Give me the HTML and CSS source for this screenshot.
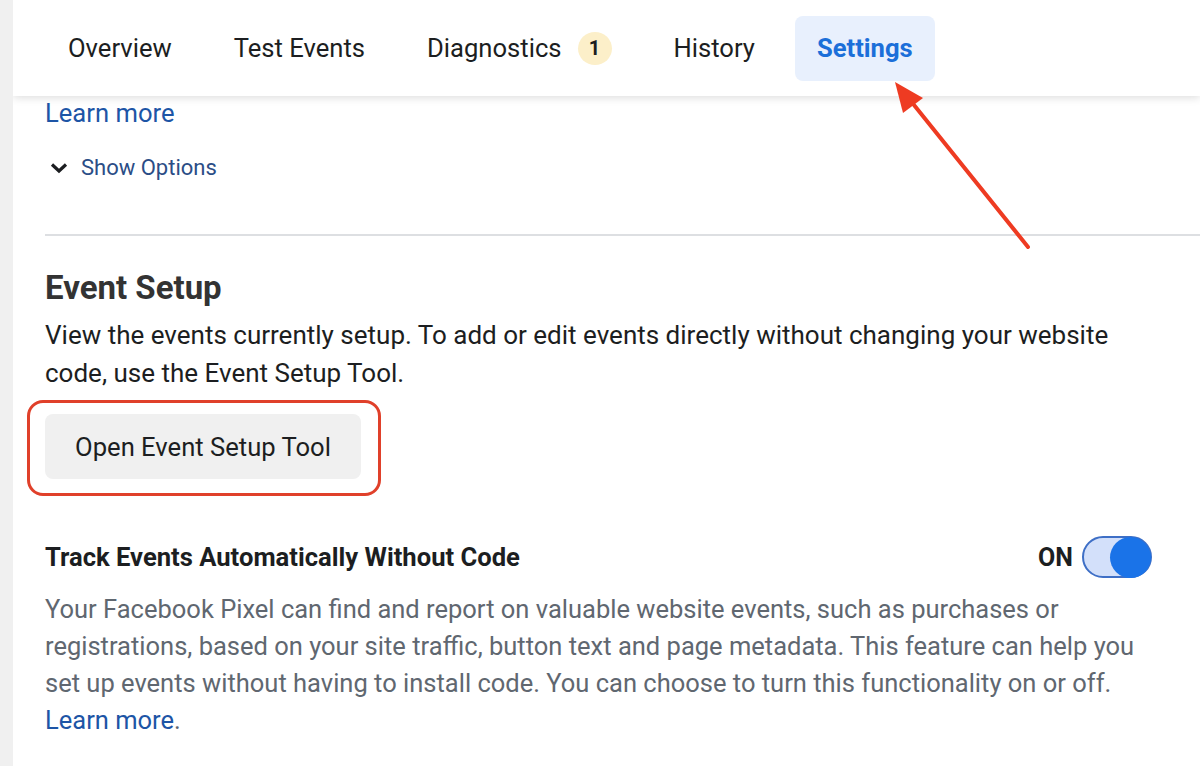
FILE: index.html
```html
<!DOCTYPE html>
<html>
<head>
    <title>Pixel Settings</title>
    <meta name="viewport" content="width=device-width, initial-scale=1.0">
    <link rel="stylesheet" href="styles.css">
</head>
<body>
    <div class="side-strip"></div>
    <div class="main">
        <nav class="tabs">
            <a class="tab">Overview</a>
            <a class="tab">Test Events</a>
            <a class="tab">Diagnostics <span class="badge">1</span></a>
            <a class="tab">History</a>
            <a class="tab active">Settings</a>
        </nav>

        <div class="content">
            <a class="link learn-top">Learn more</a>
            <div class="show-options">
                <svg width="20" height="14" viewBox="0 0 20 14"><path d="M3 3.5 L10 10 L17 3.5" fill="none" stroke="#1c1e21" stroke-width="3.2"/></svg>
                <span>Show Options</span>
            </div>

            <hr class="divider">

            <h2 class="section-title">Event Setup</h2>
            <p class="section-text">View the events currently setup. To add or edit events directly without changing your website code, use the Event Setup Tool.</p>

            <div class="highlight">
                <button class="btn">Open Event Setup Tool</button>
            </div>

            <div class="track-row">
                <h3 class="track-title">Track Events Automatically Without Code</h3>
                <div class="toggle-wrap">
                    <span class="toggle-label">ON</span>
                    <span class="toggle"><span class="knob"></span></span>
                </div>
            </div>
            <p class="track-text">Your Facebook Pixel can find and report on valuable website events, such as purchases or registrations, based on your site traffic, button text and page metadata. This feature can help you set up events without having to install code. You can choose to turn this functionality on or off. <a class="link">Learn more</a>.</p>
        </div>

        <!-- annotation arrow pointing at the Settings tab -->
        <svg class="arrow" width="160" height="180" viewBox="0 0 160 180">
            <line x1="148" y1="167" x2="30" y2="20" stroke="#ee3b22" stroke-width="4" stroke-linecap="round"/>
            <polygon points="15,2 43,18 23,33" fill="#ee3b22"/>
        </svg>
    </div>
</body>
</html>
```

FILE: styles.css
```css
body {
    margin: 0;
    display: flex;
    min-height: 766px;
    font-family: Roboto, "Liberation Sans", sans-serif;
    color: #1c1e21;
    background: #fff;
}

.side-strip {
    width: 13px;
    flex-shrink: 0;
    background: #f0f0f0;
}

.main {
    flex: 1;
    position: relative;
    overflow: hidden;
}

.tabs {
    display: flex;
    align-items: center;
    gap: 18px;
    height: 96px;
    padding-left: 33px;
    background: #fff;
    box-shadow: 0 2px 8px rgba(0, 0, 0, 0.13);
    position: relative;
    z-index: 1;
}

.tab {
    display: flex;
    align-items: center;
    height: 65px;
    padding: 0 22px;
    font-size: 25.6px;
    color: #1c1e21;
    border-radius: 8px;
}

.tab.active {
    background: #e8f0fd;
    color: #1b6fd9;
    font-weight: 700;
}

.badge {
    display: inline-flex;
    align-items: center;
    justify-content: center;
    width: 34px;
    height: 33px;
    margin-left: 16px;
    border-radius: 50%;
    background: #fcefc9;
    font-size: 20px;
    font-weight: 700;
    color: #1c1e21;
}

.content {
    padding: 0 0 0 32px;
}

.link {
    color: #1d55a6;
}

.learn-top {
    display: block;
    font-size: 25.6px;
    line-height: 34px;
}

.show-options {
    display: flex;
    align-items: center;
    gap: 12px;
    margin-top: 25px;
    padding-left: 4px;
    font-size: 22px;
    color: #2b4d86;
}

.divider {
    border: none;
    border-top: 2px solid #dddfe2;
    margin: 54px 0 0 0;
}

.section-title {
    font-size: 33px;
    font-weight: 700;
    color: #333;
    margin: 32px 0 0 0;
    line-height: 40px;
}

.section-text {
    font-size: 26px;
    line-height: 38px;
    margin: 8px 0 0 0;
    max-width: 1090px;
}

.highlight {
    display: inline-block;
    margin: 8px 0 0 -18px;
    padding: 11px 17px 14px 15px;
    border: 3px solid #e0402a;
    border-radius: 16px;
}

.btn {
    display: block;
    width: 316px;
    height: 65px;
    border: none;
    border-radius: 8px;
    background: #f0f0f0;
    font-family: Roboto, "Liberation Sans", sans-serif;
    font-size: 25.6px;
    color: #1c1e21;
}

.track-row {
    display: flex;
    align-items: center;
    justify-content: space-between;
    margin-top: 40px;
    padding-right: 48px;
}

.track-title {
    font-size: 25.6px;
    font-weight: 700;
    margin: 0;
}

.toggle-wrap {
    display: flex;
    align-items: center;
    gap: 9px;
}

.toggle-label {
    font-size: 25px;
    font-weight: 700;
}

.toggle {
    display: flex;
    justify-content: flex-end;
    align-items: center;
    width: 66px;
    height: 38px;
    border: 2px solid #3e6fc6;
    border-radius: 21px;
    background: #d3e0fa;
}

.knob {
    width: 41px;
    height: 41px;
    border-radius: 50%;
    background: #1a73e8;
    margin-right: -1px;
}

.track-text {
    font-size: 25.5px;
    line-height: 37px;
    color: #606770;
    margin: 13px 0 0 0;
    max-width: 1110px;
}

.arrow {
    position: absolute;
    left: 867px;
    top: 80px;
    z-index: 2;
}
```
